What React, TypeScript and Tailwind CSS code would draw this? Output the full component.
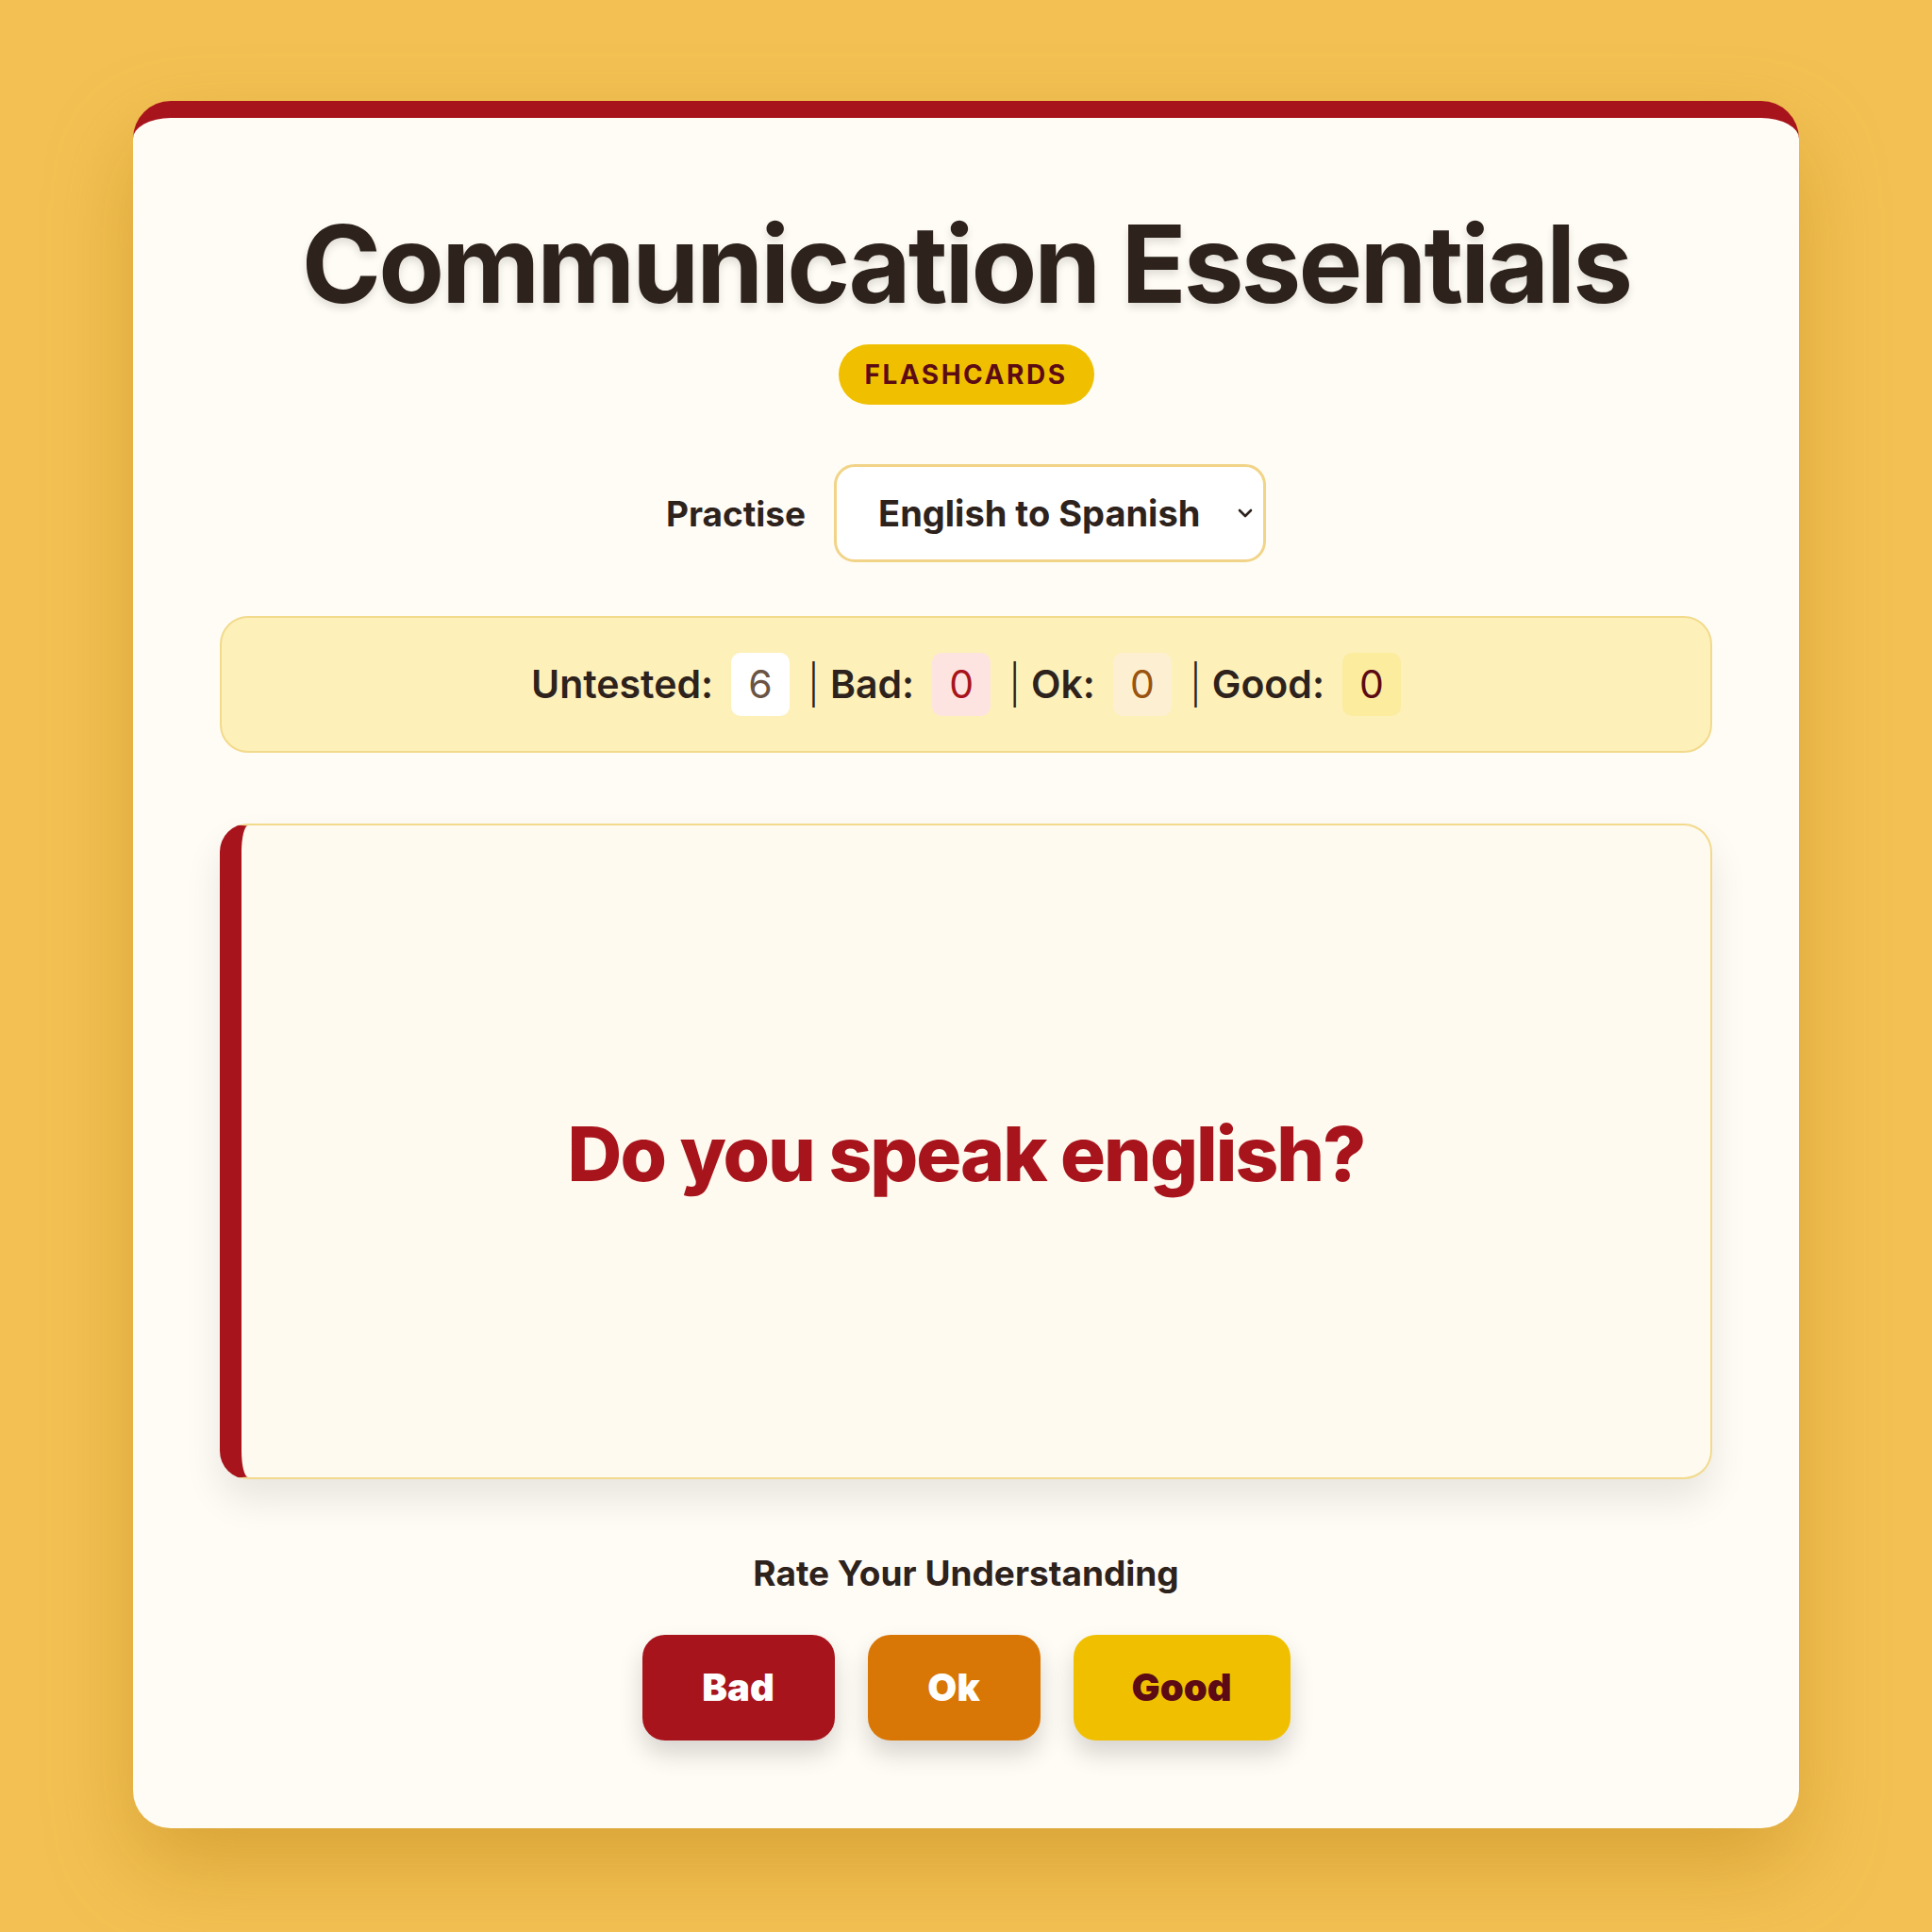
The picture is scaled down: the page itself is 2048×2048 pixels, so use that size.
import { useState } from 'react';

type Rating = 'untested' | 'bad' | 'ok' | 'good';

const cards = [
  { en: 'Do you speak english?', es: '¿Hablas inglés?' },
  { en: 'I don’t understand', es: 'No entiendo' },
  { en: 'Can you repeat that?', es: '¿Puedes repetirlo?' },
  { en: 'How do you say...?', es: '¿Cómo se dice...?' },
  { en: 'Slower, please', es: 'Más despacio, por favor' },
  { en: 'What does it mean?', es: '¿Qué significa?' },
];

const counters: { key: Rating; label: string; first?: boolean; chip: string }[] = [
  { key: 'untested', label: 'Untested:', first: true, chip: 'bg-white text-[#6b5444]' },
  { key: 'bad', label: 'Bad:', chip: 'bg-[#fde4e1] text-[#a8141c]' },
  { key: 'ok', label: 'Ok:', chip: 'bg-[#fdf0d2] text-[#9a5410]' },
  { key: 'good', label: 'Good:', chip: 'bg-[#fcec9e] text-[#5c0a14]' },
];

export default function App() {
  const [mode, setMode] = useState('en-es');
  const [index] = useState(0);
  const [counts] = useState<Record<Rating, number>>({ untested: 6, bad: 0, ok: 0, good: 0 });

  const card = cards[index];
  const prompt = mode === 'en-es' ? card.en : card.es;

  return (
    <div className="min-h-screen bg-[#f3c153] py-[107px] font-['Inter',sans-serif] text-[#2d221c]">
      <div className="mx-auto w-[1766px] rounded-[40px] border-t-[18px] border-[#a8141c] bg-[#fffcf6] px-[92px] pt-[92px] pb-[93px] shadow-[0_40px_90px_rgba(170,110,0,0.35)]">
        {/* Header */}
        <h1 className="text-center text-[114px] leading-[1.1] font-bold tracking-[-0.026em] [text-shadow:0_5px_8px_rgba(0,0,0,0.12)]">
          Communication Essentials
        </h1>
        <div className="mt-[23px] flex justify-center">
          <span className="flex h-[64px] items-center rounded-full bg-[#f0c000] px-[28px] text-[28px] font-bold tracking-[0.09em] text-[#5c0a14]">
            FLASHCARDS
          </span>
        </div>

        {/* Direction picker */}
        <div className="mt-[63px] flex items-center justify-center gap-[30px]">
          <label htmlFor="mode" className="text-[37px] font-bold">
            Practise
          </label>
          <div className="relative">
            <select
              id="mode"
              value={mode}
              onChange={e => setMode(e.target.value)}
              className="h-[104px] w-[458px] appearance-none rounded-[22px] border-[3px] border-[#f2d488] bg-white pl-[44px] text-[38px] font-bold text-[#2d221c] outline-none"
            >
              <option value="en-es">English to Spanish</option>
              <option value="es-en">Spanish to English</option>
            </select>
            <svg
              className="pointer-events-none absolute top-1/2 right-[14px] -translate-y-1/2"
              width="16"
              height="10"
              viewBox="0 0 16 10"
              fill="none"
            >
              <path d="M2 2L8 8L14 2" stroke="#2d221c" strokeWidth="2.6" strokeLinecap="round" strokeLinejoin="round" />
            </svg>
          </div>
        </div>

        {/* Progress counters */}
        <div className="mt-[57px] flex h-[145px] items-center justify-center gap-[19px] rounded-[30px] border-2 border-[#f2da8c] bg-[#fdf0b9] text-[41px] font-semibold">
          {counters.map(c => (
            <div key={c.key} className="flex items-center gap-[19px]">
              <span>
                {!c.first && <span className="mr-[11px] font-light">|</span>}
                {c.label}
              </span>
              <span className={`flex h-[67px] min-w-[62px] items-center justify-center rounded-[10px] px-[14px] font-normal ${c.chip}`}>
                {counts[c.key]}
              </span>
            </div>
          ))}
        </div>

        {/* Card */}
        <div className="mt-[75px] flex h-[695px] items-center justify-center rounded-[30px] border-2 border-l-[23px] border-[#f2da8c] border-l-[#a8141c] bg-[#fffaef] pr-[21px] shadow-[0_22px_40px_rgba(0,0,0,0.09)]">
          <p className="mt-[4px] text-[80px] font-extrabold tracking-[-0.025em] text-[#a8141c]">{prompt}</p>
        </div>

        {/* Rating */}
        <p className="mt-[76px] text-center text-[37px] leading-[48px] font-bold">Rate Your Understanding</p>
        <div className="mt-[41px] flex justify-center gap-[35px]">
          <button className="h-[112px] w-[204px] rounded-[24px] bg-[#a8141c] text-[40px] font-black text-white shadow-[0_14px_26px_rgba(0,0,0,0.16)]">
            Bad
          </button>
          <button className="h-[112px] w-[183px] rounded-[24px] bg-[#d97706] text-[40px] font-black text-white shadow-[0_14px_26px_rgba(0,0,0,0.16)]">
            Ok
          </button>
          <button className="h-[112px] w-[230px] rounded-[24px] bg-[#f0c000] text-[40px] font-black text-[#5c0a14] shadow-[0_14px_26px_rgba(0,0,0,0.16)]">
            Good
          </button>
        </div>
      </div>
    </div>
  );
}
